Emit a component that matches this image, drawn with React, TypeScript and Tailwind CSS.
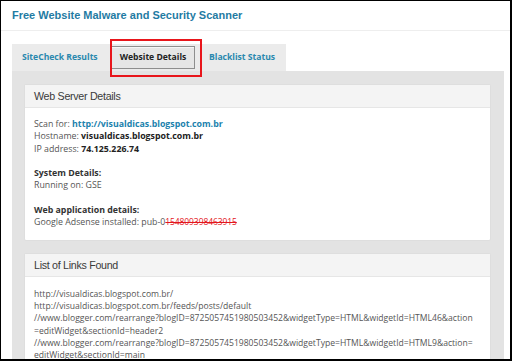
import React from 'react';

const links = [
  'http://visualdicas.blogspot.com.br/',
  'http://visualdicas.blogspot.com.br/feeds/posts/default',
  '//www.blogger.com/rearrange?blogID=8725057451980503452&widgetType=HTML&widgetId=HTML46&action',
  '=editWidget&sectionId=header2',
  '//www.blogger.com/rearrange?blogID=8725057451980503452&widgetType=HTML&widgetId=HTML9&action=',
  'editWidget&sectionId=main',
];

const Card: React.FC<{ title: string; children: React.ReactNode; bodyClass?: string }> = ({ title, children, bodyClass }) => (
  <div className="w-[467px] rounded-[2px] border border-[#dedede] bg-white">
    <div className="flex h-[23px] items-center border-b border-[#e6e6e6] bg-[#f4f4f4] pl-[9px] font-['Liberation_Sans',Arial,sans-serif] text-[10.7px] tracking-[-0.3px] text-[#3a3a3a]">
      {title}
    </div>
    <div className={`px-[9px] leading-[12.3px] text-[#555] ${bodyClass ?? ''}`}>{children}</div>
  </div>
);

export default function App() {
  return (
    <div className="relative h-[361px] w-[512px] overflow-hidden border-b-2 border-l border-r-2 border-t border-black bg-white font-['Open_Sans',sans-serif]">
      {/* Title */}
      <div className="flex h-[30px] items-center border-b border-[#eeeeee] pl-[11px] font-['Liberation_Sans',Arial,sans-serif] text-[11px] font-bold text-[#1f7ba3]">
        Free Website Malware and Security Scanner
      </div>

      <div className="px-[11px] pt-[13px]">
        {/* Tabs */}
        <div className="relative flex h-[27px] w-[274px] bg-[#ebebeb] text-[8.6px] font-bold">
          <div className="flex w-[99px] items-center pl-[10px] text-[#2a88ae]">SiteCheck Results</div>
          <div className="mt-[2px] flex h-[23px] w-[84px] items-center justify-center border border-[#8e8e8e] bg-[#e6e6e6] text-[#222] shadow-[inset_0_1px_0_#f6f6f6]">
            Website Details
          </div>
          <div className="flex items-center pl-[14px] text-[#2a88ae]">Blacklist Status</div>
          <div className="absolute left-[98px] top-[-5px] h-[38px] w-[92px] border-2 border-[#e8151b]" />
        </div>

        {/* Panel */}
        <div className="flex w-[492px] flex-col gap-[12px] bg-[#e3e3e3] px-[12px] pb-[12px] pt-[13px]">
          <Card title="Web Server Details" bodyClass="text-[8.8px] pt-[10px] pb-[11px]">
            <div>
              Scan for: <span className="font-bold text-[#1c82ad]">http://visualdicas.blogspot.com.br</span>
            </div>
            <div>
              Hostname: <span className="font-bold text-[#222]">visualdicas.blogspot.com.br</span>
            </div>
            <div>
              IP address: <span className="font-bold text-[#222]">74.125.226.74</span>
            </div>
            <div className="mt-[12.3px] font-bold text-[#333]">System Details:</div>
            <div>Running on: GSE</div>
            <div className="mt-[12.3px] font-bold text-[#333]">Web application details:</div>
            <div className="whitespace-nowrap">
              Google Adsense installed: pub-0
              <span className="text-[8.5px] tracking-[-0.1px] text-[#e3161d] line-through">154809398463915</span>
            </div>
          </Card>

          <Card title="List of Links Found" bodyClass="text-[8.6px] pt-[11px] pb-[11px]">
            {links.map((l) => (
              <div key={l} className="whitespace-nowrap">
                {l}
              </div>
            ))}
          </Card>
        </div>
      </div>
    </div>
  );
}
